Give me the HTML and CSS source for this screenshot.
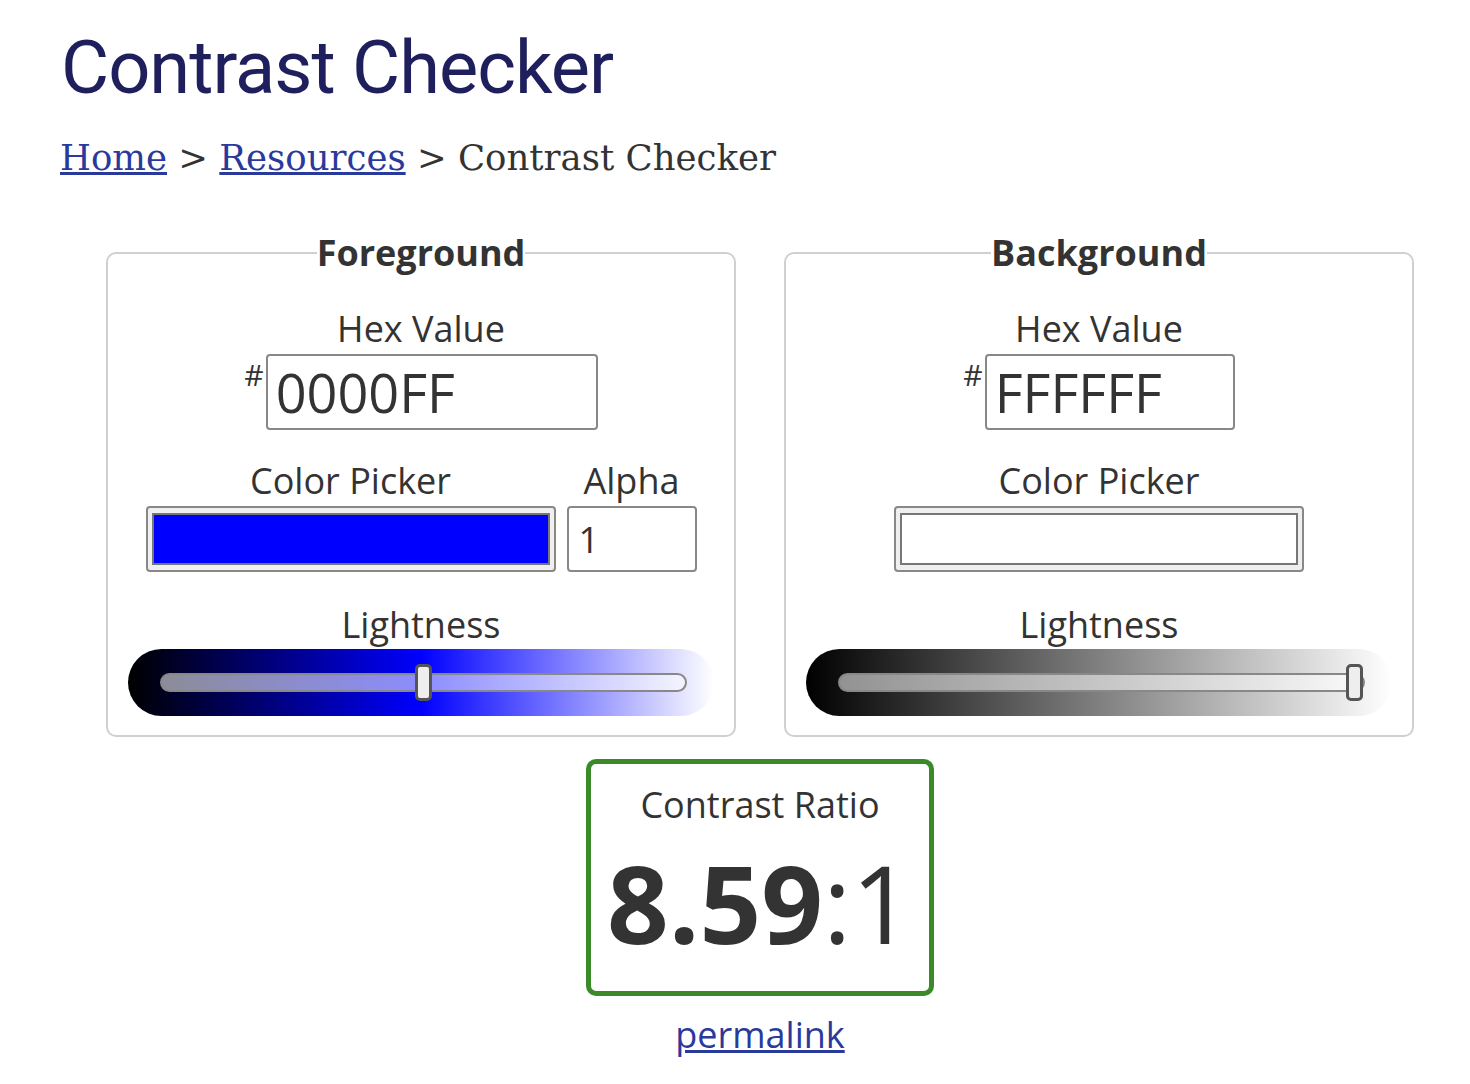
FILE: index.html
```html
<!DOCTYPE html>
<html lang="en">
<head>
  <meta charset="UTF-8">
  <meta name="viewport" content="width=device-width, initial-scale=1.0">
  <title>Contrast Checker</title>
  <link rel="stylesheet" href="styles.css">
</head>
<body>
  <main class="page">
    <h1 class="title">Contrast Checker</h1>

    <!-- Breadcrumb trail -->
    <nav class="breadcrumb">
      <a href="#">Home</a> &gt; <a href="#">Resources</a> &gt; Contrast Checker
    </nav>

    <!-- Foreground / background pickers -->
    <div class="pickers">
      <fieldset class="picker">
        <legend>Foreground</legend>
        <label class="field-label" for="fgHex">Hex Value</label>
        <div class="hex-row">
          <span class="hash">#</span>
          <input type="text" id="fgHex" class="hex-input hex-wide" value="0000FF">
        </div>

        <div class="picker-row">
          <div class="picker-col">
            <label class="field-label" for="fgColor">Color Picker</label>
            <input type="color" id="fgColor" class="color-input" value="#0000ff">
          </div>
          <div class="picker-col">
            <label class="field-label" for="fgAlpha">Alpha</label>
            <input type="text" id="fgAlpha" class="alpha-input" value="1">
          </div>
        </div>

        <label class="field-label" for="fgLight">Lightness</label>
        <input type="range" id="fgLight" class="lightness lightness-blue" min="0" max="100" value="50">
      </fieldset>

      <fieldset class="picker">
        <legend>Background</legend>
        <label class="field-label" for="bgHex">Hex Value</label>
        <div class="hex-row">
          <span class="hash">#</span>
          <input type="text" id="bgHex" class="hex-input" value="FFFFFF">
        </div>

        <div class="picker-row">
          <div class="picker-col">
            <label class="field-label" for="bgColor">Color Picker</label>
            <input type="color" id="bgColor" class="color-input" value="#ffffff">
          </div>
        </div>

        <label class="field-label" for="bgLight">Lightness</label>
        <input type="range" id="bgLight" class="lightness lightness-gray" min="0" max="100" value="100">
      </fieldset>
    </div>

    <!-- Result -->
    <div class="result">
      <div class="result-label">Contrast Ratio</div>
      <div class="ratio"><b>8.59</b>:1</div>
    </div>
    <a class="permalink" href="#">permalink</a>
  </main>
</body>
</html>
```

FILE: styles.css
```css
body {
  margin: 0;
  background-color: #fff;
  color: #333;
  font-family: "Open Sans", sans-serif;
}

.page {
  padding: 0 10px 20px 60px;
  display: flex;
  flex-direction: column;
}

.title {
  font-family: Roboto, sans-serif;
  font-weight: 400;
  font-size: 74px;
  letter-spacing: -1px;
  line-height: 1;
  color: #1e1f5c;
  margin: 31px 0 0 1px;
}

.breadcrumb {
  font-family: "DejaVu Serif", serif;
  font-size: 35.5px;
  margin-top: 32px;
  color: #333;
}

.breadcrumb a {
  color: #2a3a9c;
}

.pickers {
  display: flex;
  justify-content: center;
  gap: 48px;
  margin-top: 57px;
}

.picker {
  width: 630px;
  box-sizing: border-box;
  margin: 0;
  padding: 34px 20px 19px;
  border: 2px solid #d0d0d0;
  border-radius: 10px;
  display: flex;
  flex-direction: column;
  align-items: center;
}

.picker legend {
  font-weight: 700;
  font-size: 36px;
  line-height: 36px;
  padding: 0;
  margin: 0 auto;
  color: #333;
}

.field-label {
  display: block;
  text-align: center;
  font-size: 36px;
  line-height: 48px;
}

.hex-row {
  display: flex;
  align-items: flex-start;
  margin-top: 1px;
  margin-bottom: 27px;
}

.hash {
  font-size: 30px;
  line-height: 1;
  margin-right: 2px;
  margin-top: 6px;
}

.hex-input {
  width: 250px;
  height: 76px;
  box-sizing: border-box;
  border: 2px solid #888;
  border-radius: 4px;
  padding: 0 8px;
  font-family: "Open Sans", sans-serif;
  font-size: 54px;
  color: #333;
}

.hex-wide {
  width: 332px;
}

.picker-row {
  display: flex;
  gap: 11px;
  align-items: flex-end;
  margin-bottom: 29px;
}

.color-input {
  display: block;
  width: 410px;
  height: 66px;
  box-sizing: border-box;
  padding: 5px 4px;
  background-color: #efefef;
  border: 2px solid #888;
  border-radius: 4px;
  margin: 1px 0 0;
  -webkit-appearance: none;
}

.color-input::-webkit-color-swatch-wrapper {
  padding: 0;
}

.color-input::-webkit-color-swatch {
  border: 2px solid #777;
  border-radius: 0;
}

.alpha-input {
  display: block;
  width: 130px;
  height: 66px;
  box-sizing: border-box;
  border: 2px solid #888;
  border-radius: 4px;
  margin: 1px 0 0;
  padding: 0 10px;
  font-family: "Open Sans", sans-serif;
  font-size: 36px;
  color: #333;
}

.lightness {
  -webkit-appearance: none;
  appearance: none;
  width: 586px;
  height: 67px;
  margin: 0;
  padding: 0 27px 0 32px;
  box-sizing: border-box;
  border-radius: 34px;
}

.lightness-blue {
  background: linear-gradient(to right, #000 0%, #0000ff 50%, #fff 100%);
}

.lightness-gray {
  background: linear-gradient(to right, #000 0%, #fff 100%);
}

.lightness::-webkit-slider-runnable-track {
  height: 19px;
  box-sizing: border-box;
  border: 2px solid #888;
  border-radius: 10px;
  background: rgba(255, 255, 255, 0.55);
}

.lightness::-webkit-slider-thumb {
  -webkit-appearance: none;
  width: 17px;
  height: 37px;
  margin-top: -11px;
  box-sizing: border-box;
  border: 3px solid #555;
  border-radius: 5px;
  background: #eee;
}

.result {
  align-self: center;
  width: 348px;
  height: 237px;
  box-sizing: border-box;
  margin-top: 22px;
  border: 5px solid #3b8a2a;
  border-radius: 10px;
  text-align: center;
  padding-top: 17px;
}

.result-label {
  font-size: 36px;
  line-height: 48px;
}

.ratio {
  font-size: 108px;
  line-height: 1;
  margin-top: 20px;
}

.ratio b {
  font-weight: 700;
}

.permalink {
  align-self: center;
  margin-top: 14px;
  font-size: 36px;
  color: #2a3a9c;
}
```
